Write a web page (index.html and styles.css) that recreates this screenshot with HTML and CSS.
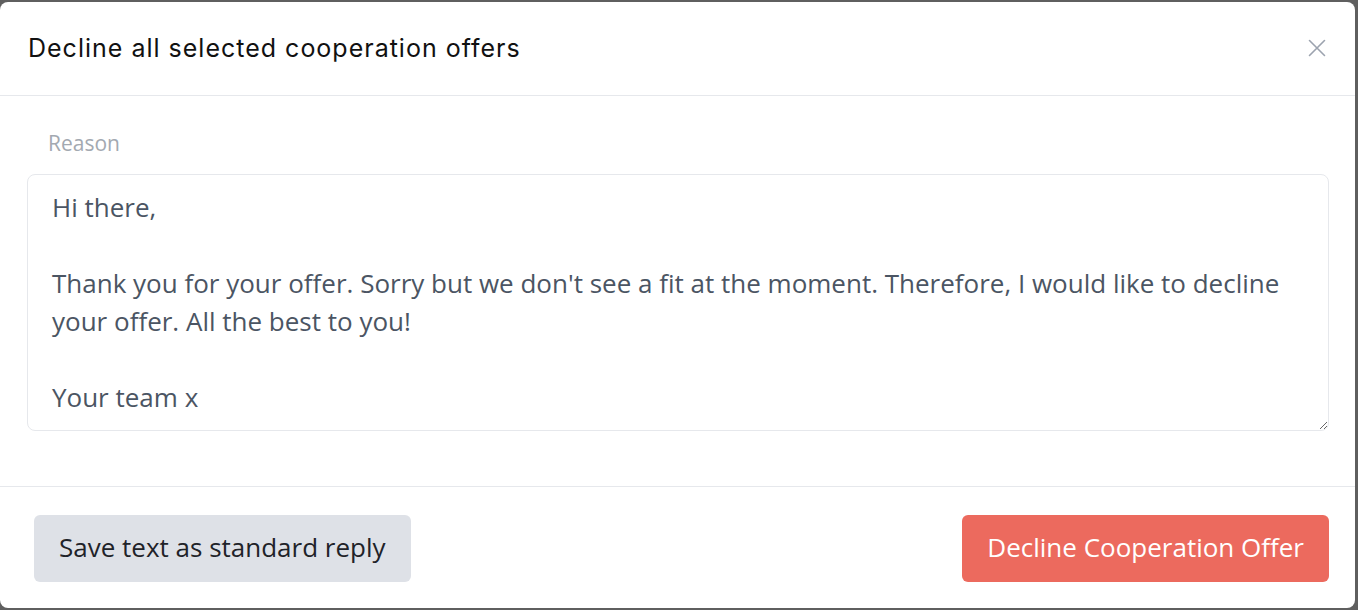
FILE: index.html
```html
<!DOCTYPE html>
<html lang="en">
<head>
<meta charset="utf-8">
<title>Decline offers</title>
<link rel="stylesheet" href="styles.css">
</head>
<body>
<div class="modal">
  <header class="modal-header">
    <h2 class="modal-title">Decline all selected cooperation offers</h2>
    <button class="close" aria-label="Close">
      <svg width="18" height="18" viewBox="0 0 18 18"><path d="M1.5 1.5 L16.5 16.5 M16.5 1.5 L1.5 16.5" stroke="#9ca3af" stroke-width="1.6" fill="none" stroke-linecap="round"/></svg>
    </button>
  </header>
  <div class="modal-body">
    <label class="field-label" for="reason">Reason</label>
    <textarea id="reason" class="reason">Hi there,

Thank you for your offer. Sorry but we don't see a fit at the moment. Therefore, I would like to decline your offer. All the best to you!

Your team x</textarea>
  </div>
  <footer class="modal-footer">
    <button class="btn btn-secondary">Save text as standard reply</button>
    <button class="btn btn-danger">Decline Cooperation Offer</button>
  </footer>
</div>
</body>
</html>
```
FILE: styles.css
```css
html, body {
  margin: 0;
  padding: 0;
}
body {
  background: #5f5f5f;
  height: 610px;
  overflow: hidden;
}
.modal {
  margin-top: 2px;
  width: 1355px;
  height: 606px;
  background: #ffffff;
  border-radius: 8px;
  display: flex;
  flex-direction: column;
  box-sizing: border-box;
}
.modal-header {
  height: 94px;
  box-sizing: border-box;
  border-bottom: 1px solid #e6e8ec;
  display: flex;
  align-items: center;
  justify-content: space-between;
  padding: 0 27px 2px 28px;
}
.modal-title {
  margin: 0;
  font-family: "Inter", "Liberation Sans", sans-serif;
  font-weight: 400;
  font-size: 25px;
  color: #111111;
  letter-spacing: 1px;
}
.close {
  border: 0;
  background: transparent;
  padding: 0;
  width: 18px;
  height: 18px;
  margin-right: 2px;
  cursor: pointer;
  display: flex;
}
.modal-body {
  flex: 1;
  display: flex;
  flex-direction: column;
  padding: 33px 26px 0 27px;
  box-sizing: border-box;
  border-bottom: 1px solid #e6e8ec;
}
.field-label {
  font-family: "Open Sans", sans-serif;
  font-size: 21px;
  line-height: 28px;
  color: #a3a9b1;
  padding-left: 21px;
  margin-bottom: 17px;
}
.reason {
  height: 257px;
  box-sizing: border-box;
  border: 1.5px solid #e6e8ec;
  border-radius: 8px;
  padding: 13px 24px;
  font-family: "Open Sans", sans-serif;
  font-size: 26px;
  line-height: 38px;
  color: #4b5563;
  resize: vertical;
  outline: none;
  overflow: hidden;
}
.modal-footer {
  height: 121px;
  box-sizing: border-box;
  display: flex;
  justify-content: space-between;
  align-items: flex-start;
  padding: 28px 26px 0 34px;
}
.btn {
  height: 67px;
  border: 0;
  border-radius: 6px;
  padding: 0 25px 3px;
  font-family: "Open Sans", sans-serif;
  font-size: 26px;
  cursor: pointer;
}
.btn-secondary {
  background: #dee1e7;
  color: #1f2329;
}
.btn-danger {
  background: #ec6a5e;
  color: #ffffff;
}
```
